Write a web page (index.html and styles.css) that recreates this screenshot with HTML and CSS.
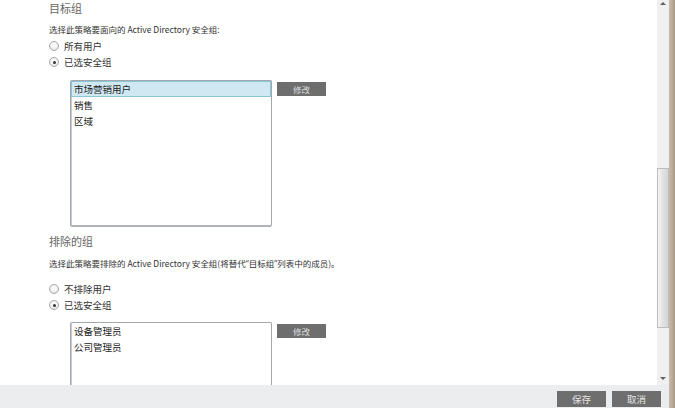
FILE: index.html
```html
<!DOCTYPE html>
<html lang="zh-CN">
<head>
<meta charset="utf-8">
<link rel="stylesheet" href="styles.css">
</head>
<body>
<div class="app">
  <div class="main">
    <div class="content">
      <div class="heading">目标组</div>
      <div class="desc">选择此策略要面向的 Active Directory 安全组:</div>
      <div class="radios">
        <label class="radio"><span class="dot"></span>所有用户</label>
        <label class="radio"><span class="dot checked"></span>已选安全组</label>
      </div>
      <div class="group">
        <div class="listbox tall">
          <div class="item selected">市场营销用户</div>
          <div class="item">销售</div>
          <div class="item">区域</div>
        </div>
        <div class="btn small">修改</div>
      </div>

      <div class="heading second">排除的组</div>
      <div class="desc desc2">选择此策略要排除的 Active Directory 安全组(将替代<span class="q">“</span>目标组<span class="q">”</span>列表中的成员)。</div>
      <div class="radios radios2">
        <label class="radio"><span class="dot"></span>不排除用户</label>
        <label class="radio"><span class="dot checked"></span>已选安全组</label>
      </div>
      <div class="group group2">
        <div class="listbox tall">
          <div class="item">设备管理员</div>
          <div class="item">公司管理员</div>
        </div>
        <div class="btn small">修改</div>
      </div>
    </div>
    <div class="scrollbar">
      <div class="arrow up"></div>
      <div class="thumb"></div>
      <div class="spacer"></div>
      <div class="arrow down"></div>
    </div>
  </div>
  <div class="footer">
    <div class="btn big">保存</div>
    <div class="btn big">取消</div>
  </div>
</div>
<div class="edge"></div>
</body>
</html>
```
FILE: styles.css
```css
html, body {
  margin: 0;
  padding: 0;
}
body {
  width: 675px;
  height: 408px;
  overflow: hidden;
  display: flex;
  background: #fff;
  font-family: "Noto Sans CJK SC", "Open Sans", sans-serif;
  font-size: 9px;
  color: #333;
}
.app {
  flex: 1;
  display: flex;
  flex-direction: column;
}
.main {
  height: 385px;
  display: flex;
}
.content {
  flex: 1;
  overflow: hidden;
  padding-left: 49px;
}
.heading {
  font-size: 11px;
  line-height: 16px;
  color: #666;
}
.heading.second {
  margin-top: 6px;
}
.desc {
  margin-top: 7px;
  line-height: 12px;
  font-size: 8.5px;
  color: #333;
}
.desc2 {
  margin-top: 8px;
}
.q {
  font-family: "Open Sans", sans-serif;
}
.radios {
  margin-top: 3px;
  display: flex;
  flex-direction: column;
}
.radios2 {
  margin-top: 11px;
}
.radio {
  height: 16px;
  display: flex;
  align-items: center;
  gap: 5px;
  color: #333;
  font-size: 9.5px;
}
.dot {
  width: 8px;
  height: 8px;
  border: 1px solid #a8a8a8;
  border-radius: 50%;
  background: radial-gradient(circle at 50% 40%, #ffffff 0%, #f2f2f2 50%, #d6d6d6 100%);
  display: flex;
  align-items: center;
  justify-content: center;
}
.dot.checked::after {
  content: "";
  width: 3px;
  height: 3px;
  border-radius: 50%;
  background: #333;
}
.group {
  margin-top: 10px;
  margin-left: 21px;
  display: flex;
  align-items: flex-start;
  gap: 5px;
}
.group2 {
  margin-top: 9px;
}
.listbox {
  width: 200px;
  height: 144px;
  border: 1px solid #a4a8ad;
  border-bottom: 2px solid #b0b3b7;
  border-radius: 2px;
  box-shadow: inset 1px 0 0 #c8ccd0;
  color: #222;
}
.item {
  height: 16px;
  line-height: 16px;
  padding-left: 3px;
  font-size: 9.5px;
}
.item.selected {
  background: #cfe8f2;
  border: 1px solid #8ac6d8;
  height: 14px;
  line-height: 14px;
  padding-left: 2px;
}
.btn {
  background: #6e6e6e;
  color: #dcdcdc;
  text-align: center;
}
.btn.small {
  width: 49px;
  height: 14px;
  line-height: 14px;
  margin-top: 2px;
  font-size: 8.5px;
}
.scrollbar {
  width: 12px;
  background: #f0f0f0;
  display: flex;
  flex-direction: column;
  align-items: center;
}
.arrow {
  width: 0;
  height: 0;
  border-left: 3px solid transparent;
  border-right: 3px solid transparent;
}
.arrow.up {
  margin-top: 2px;
  border-bottom: 3px solid #606060;
}
.arrow.down {
  margin-bottom: 5px;
  border-top: 3px solid #606060;
}
.thumb {
  margin-top: 163px;
  width: 10px;
  height: 158px;
  border: 1px solid #bdbdbd;
  background: linear-gradient(to right, #f4f4f4, #e2e2e2 50%, #d4d4d4);
  align-self: flex-start;
  margin-left: 0;
}
.spacer {
  flex: 1;
}
.footer {
  height: 23px;
  background: #ecedef;
  display: flex;
  justify-content: flex-end;
  gap: 6px;
  padding: 6px 8px 0 0;
  box-sizing: border-box;
}
.btn.big {
  width: 49px;
  height: 16px;
  line-height: 16px;
  font-size: 9.5px;
  color: #e4e4e4;
}
.edge {
  width: 6px;
  background: linear-gradient(to right, #c9bcae, #a99886);
}
```
